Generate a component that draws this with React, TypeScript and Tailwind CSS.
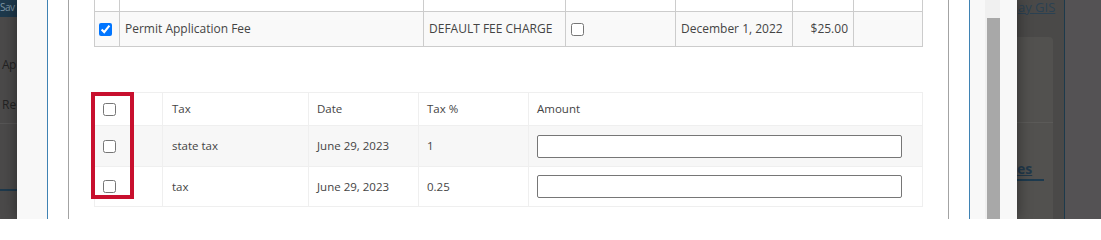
export default function App() {
  const upperCols = "grid grid-cols-[25px_304px_142px_110px_117px_61px_69px]";
  const lowerCols = "grid grid-cols-[68px_146px_110px_110px_394px]";

  return (
    <div className="flex h-[219px] w-[1101px] overflow-hidden bg-[#545254] font-['Open_Sans',sans-serif] text-[#444]">
      {/* page behind the modal, left edge */}
      <div className="flex w-[17px] shrink-0 flex-col overflow-hidden whitespace-nowrap bg-[#4b4a4a]">
        <div className="h-[17px] bg-[#1e394c] text-[10px] leading-[14px] tracking-[-0.5px] text-[#7f96a5]">Sav</div>
        <div className="mt-[38px] pl-[2px] text-[12px] leading-[20px] tracking-[-0.5px] text-[#232323]">Ap</div>
        <div className="mt-[20px] pl-[2px] text-[12px] leading-[20px] text-[#232323]">Re</div>
        <div className="mt-[8px] h-px bg-[#565555]" />
        <div className="mt-[65px] h-[2px] bg-[#1e394c]" />
      </div>

      {/* modal */}
      <div className="relative z-10 flex w-[1000px] shrink-0 bg-[#f8f8f8] pl-[30px] shadow-[0_0_14px_rgba(0,0,0,0.45)]">
        <div className="w-[923px] shrink-0 border-x border-[#3f82b3] bg-white px-[20px]">
          <div className="h-full border-x border-[#a3a3a3] px-[25px]">
            {/* fee table */}
            <div className="border-l border-[#cccccc] text-[12px]">
              <div className={upperCols}>
                {[0, 1, 2, 3, 4, 5, 6].map((i) => (
                  <div key={i} className="h-[12px] border-r border-b border-[#cccccc]" />
                ))}
              </div>
              <div className={`${upperCols} h-[35px] bg-[#f9f9f9]`}>
                <div className="flex items-center border-r border-b border-[#cccccc] pl-[4px]">
                  <input type="checkbox" defaultChecked className="m-0 h-[13px] w-[13px]" />
                </div>
                <div className="flex items-center border-r border-b border-[#cccccc] pl-[5px]">Permit Application Fee</div>
                <div className="flex items-center border-r border-b border-[#cccccc] pl-[5px]">DEFAULT FEE CHARGE</div>
                <div className="flex items-center border-r border-b border-[#cccccc] pl-[5px]">
                  <input type="checkbox" className="m-0 h-[13px] w-[13px]" />
                </div>
                <div className="flex items-center border-r border-b border-[#cccccc] pl-[5px]">December 1, 2022</div>
                <div className="flex items-center justify-end border-r border-b border-[#cccccc] pr-[5px]">$25.00</div>
                <div className="border-r border-b border-[#cccccc]" />
              </div>
            </div>

            {/* tax table */}
            <div className="relative mt-[45px] border-t border-l border-[#efefef] text-[11.5px]">
              <div className={`${lowerCols} h-[33px]`}>
                <div className="flex items-center border-r border-b border-[#efefef] pl-[8px]">
                  <input type="checkbox" className="m-0 h-[13px] w-[13px]" />
                </div>
                <div className="flex items-center border-r border-b border-[#efefef] pl-[9px]">Tax</div>
                <div className="flex items-center border-r border-b border-[#efefef] pl-[8px]">Date</div>
                <div className="flex items-center border-r border-b border-[#efefef] pl-[8px]">Tax %</div>
                <div className="flex items-center border-r border-b border-[#efefef] pl-[8px]">Amount</div>
              </div>
              {[
                { tax: "state tax", pct: "1", bg: "bg-[#f7f7f7]", h: "h-[41px]" },
                { tax: "tax", pct: "0.25", bg: "bg-white", h: "h-[40px]" },
              ].map((r) => (
                <div key={r.tax} className={`${lowerCols} ${r.h} ${r.bg}`}>
                  <div className="flex items-center border-r border-b border-[#efefef] pl-[8px]">
                    <input type="checkbox" className="m-0 h-[13px] w-[13px]" />
                  </div>
                  <div className="flex items-center border-r border-b border-[#efefef] pl-[9px]">{r.tax}</div>
                  <div className="flex items-center border-r border-b border-[#efefef] pl-[8px]">June 29, 2023</div>
                  <div className="flex items-center border-r border-b border-[#efefef] pl-[8px]">{r.pct}</div>
                  <div className="flex items-center border-r border-b border-[#efefef] pl-[8px]">
                    <input type="text" className="h-[23px] w-[365px] rounded-[2px] border border-[#767676] bg-white" />
                  </div>
                </div>
              ))}
              {/* red highlight around the checkbox column */}
              <div className="absolute top-[-1px] left-[-4px] h-[107px] w-[43px] border-4 border-[#c8102e]" />
            </div>
          </div>
        </div>

        {/* scrollbar */}
        <div className="ml-[15px] flex w-[15px] shrink-0 flex-col bg-[#f0f0f0]">
          <div className="ml-[2px] mt-[18px] flex-1 bg-[#a8a8a8]" />
        </div>
      </div>

      {/* page behind the modal, right edge */}
      <div className="flex w-[47px] shrink-0 flex-col whitespace-nowrap bg-[#4a4948]">
        <div className="h-[17px] pl-[1px] text-[13px] leading-[15px] text-[#2b4152] underline">ay GIS</div>
        <div className="mt-[20px] mr-[11px] flex flex-1 flex-col rounded-tr-[4px] bg-[#52514f]">
          <div className="h-[86px] border-b border-[#5b5a58]" />
          <div className="mt-[38px] text-[14px] leading-[16px] font-bold text-[#21384a] underline">es</div>
          <div className="mt-[2px] h-[2px] w-[27px] bg-[#1d3a4e]" />
        </div>
      </div>
      <div className="w-px shrink-0 bg-[#1d3a4c]" />
      <div className="flex-1 bg-[#545254]" />
    </div>
  );
}
